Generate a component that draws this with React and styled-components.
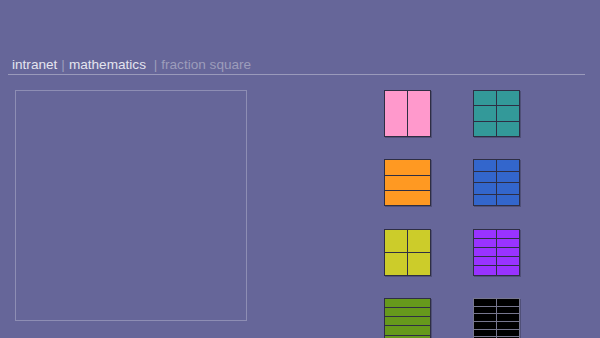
import React from "react";
import styled, { createGlobalStyle } from "styled-components";

const GlobalStyle = createGlobalStyle`
    html, body {
        margin: 0;
        padding: 0;
        background: #666699;
        overflow: hidden;
    }
    body {
        font-family: "Liberation Sans", Arial, sans-serif;
    }
`;

const Page = styled.div`
    width: 600px;
    height: 338px;
    padding-top: 57px;
    box-sizing: border-box;
`;

const Crumbs = styled.div`
    margin-left: 8px;
    width: 577px;
    padding: 0 0 1px 4px;
    box-sizing: border-box;
    border-bottom: 1px solid #9a9abb;
    font-size: 13.6px;
    line-height: 16px;
    color: #e4e4ef;
    .sep {
        color: #9d9dbb;
        margin: 0 4px;
    }
    .current {
        color: #9d9dbb;
    }
`;

const Main = styled.div`
    display: flex;
    align-items: flex-start;
    padding: 15px 0 0 15px;
`;

const Board = styled.div`
    width: 232px;
    height: 231px;
    box-sizing: border-box;
    border: 1px solid #8e8eb4;
`;

const Palette = styled.div`
    display: grid;
    grid-template-columns: 47px 47px;
    grid-auto-rows: 47px;
    column-gap: 42px;
    row-gap: 22.3px;
    margin-left: 137px;
`;

const Square = styled.div`
    box-sizing: border-box;
    width: 47px;
    height: 47px;
    border: 1px solid ${(p) => p.$line};
    background: ${(p) => p.$line};
    display: grid;
    grid-template-columns: repeat(${(p) => p.$cols}, 1fr);
    grid-template-rows: repeat(${(p) => p.$rows}, 1fr);
    gap: 1px;
    box-shadow: 1px 1px 0 rgba(40, 40, 60, 0.35);
`;

const Cell = styled.div`
    background: ${(p) => p.$color};
`;

const pieces = [
    { color: "#ff99cc", cols: 2, rows: 1 },
    { color: "#339999", cols: 2, rows: 3 },
    { color: "#ff9922", cols: 1, rows: 3 },
    { color: "#3366cc", cols: 2, rows: 4 },
    { color: "#cccc2a", cols: 2, rows: 2 },
    { color: "#9933ff", cols: 2, rows: 5 },
    { color: "#66991c", cols: 1, rows: 5 },
    { color: "#000000", cols: 2, rows: 6, line: "#77778f" },
];

const FractionPiece = ({ color, cols, rows, line = "#2e2e44" }) => (
    <Square $cols={cols} $rows={rows} $line={line}>
        {Array.from({ length: cols * rows }).map((_, i) => (
            <Cell key={i} $color={color} />
        ))}
    </Square>
);

export default function App() {
    return (
        <Page>
            <GlobalStyle />
            <Crumbs>
                intranet<span className="sep">|</span>mathematics
                <span className="sep">&nbsp;|</span>
                <span className="current">fraction square</span>
            </Crumbs>
            <Main>
                <Board />
                <Palette>
                    {pieces.map((p, i) => (
                        <FractionPiece key={i} {...p} />
                    ))}
                </Palette>
            </Main>
        </Page>
    );
}
